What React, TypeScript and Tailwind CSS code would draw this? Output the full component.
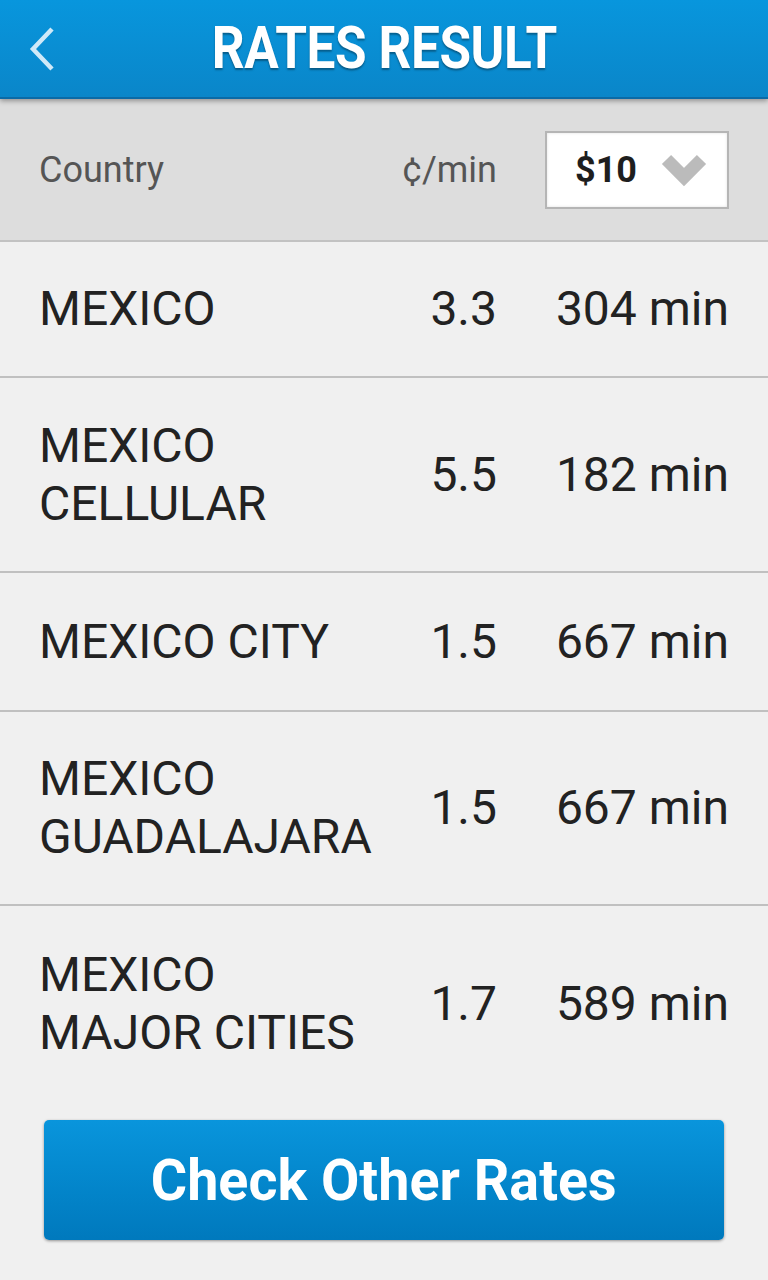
import React from "react";

const rows: { name: string[]; rate: string; mins: string; h: string }[] = [
  { name: ["MEXICO"], rate: "3.3", mins: "304 min", h: "h-[136px]" },
  { name: ["MEXICO", "CELLULAR"], rate: "5.5", mins: "182 min", h: "h-[195px]" },
  { name: ["MEXICO CITY"], rate: "1.5", mins: "667 min", h: "h-[139px]" },
  { name: ["MEXICO", "GUADALAJARA"], rate: "1.5", mins: "667 min", h: "h-[194px]" },
  { name: ["MEXICO", "MAJOR CITIES"], rate: "1.7", mins: "589 min", h: "h-[196px]" },
];

export default function App() {
  return (
    <div
      className="w-[768px] h-[1280px] bg-[#f0f0f0] flex flex-col overflow-hidden"
      style={{ fontFamily: "Roboto, 'Noto Sans', sans-serif" }}
    >
      {/* Top bar */}
      <div className="relative z-10 h-[99px] shrink-0 bg-gradient-to-b from-[#0896dd] to-[#0a86c9] border-b-2 border-[#0a6aa6] shadow-[0_2px_5px_rgba(0,0,0,0.35)] flex items-center justify-center">
        <svg
          className="absolute left-[28px] top-[26px]"
          width="28"
          height="46"
          viewBox="0 0 28 46"
        >
          <polyline
            points="24,3 5,23 24,43"
            fill="none"
            stroke="#cfe9f8"
            strokeWidth="4.5"
            strokeLinejoin="miter"
          />
        </svg>
        <span className="inline-block text-white font-bold text-[59px] leading-none tracking-[-0.5px] scale-x-[0.87] [text-shadow:0_2px_2px_rgba(0,0,0,0.35)] mt-[-2px]">
          RATES RESULT
        </span>
      </div>

      {/* Column header */}
      <div className="h-[143px] shrink-0 bg-[#dddddd] border-b-2 border-[#c2c2c2] flex items-center pl-[39px] pr-[39px]">
        <div className="flex-1 text-[36px] text-[#555555] leading-none">Country</div>
        <div className="text-[36px] text-[#555555] leading-none text-right">¢/min</div>
        <div className="ml-[48px] w-[184px] h-[78px] bg-white border-2 border-[#b5b5b5] shadow-[inset_0_0_3px_rgba(0,0,0,0.12)] flex items-center pl-[28px]">
          <span className="text-[36px] font-bold text-[#1e1e1e] leading-none">$10</span>
          <svg className="ml-[23px] mt-[2px]" width="48" height="36" viewBox="0 0 48 36">
            <polyline
              points="6.5,6.5 24,24 41.5,6.5"
              fill="none"
              stroke="#bbbbbb"
              strokeWidth="13"
              strokeLinecap="butt"
              strokeLinejoin="miter"
            />
          </svg>
        </div>
      </div>

      {/* Rows */}
      <div className="flex flex-col">
        {rows.map((r, i) => (
          <div
            key={i}
            className={
              "shrink-0 flex items-center pl-[39px] pr-[39px] text-[48px] leading-[58px] text-[#222222] " +
              r.h +
              " " +
              (i < rows.length - 1 ? "border-b-2 border-[#c0c0c0]" : "")
            }
          >
            <div className="flex-1">
              {r.name.map((n, j) => (
                <div key={j}>{n}</div>
              ))}
            </div>
            <div className="text-right">{r.rate}</div>
            <div className="w-[232px] text-right">{r.mins}</div>
          </div>
        ))}
      </div>

      {/* Button */}
      <div className="flex-1 flex items-end pb-[40px] px-[44px]">
        <button className="w-full h-[120px] rounded-[5px] bg-gradient-to-b from-[#0995dc] to-[#0079bd] shadow-[0_1px_3px_rgba(0,0,0,0.4)] flex items-center justify-center">
          <span className="inline-block text-white font-bold text-[58px] leading-none scale-x-[0.96]">
            Check Other Rates
          </span>
        </button>
      </div>
    </div>
  );
}
